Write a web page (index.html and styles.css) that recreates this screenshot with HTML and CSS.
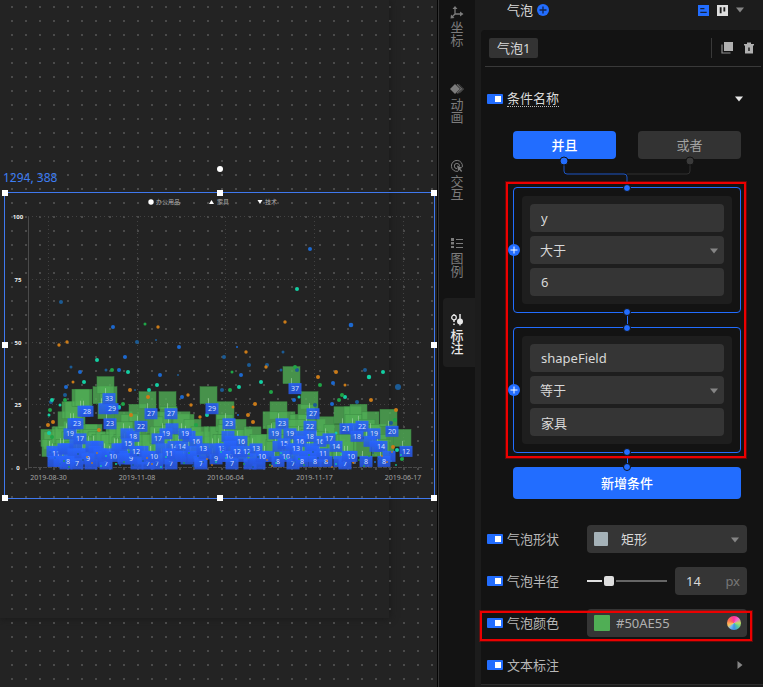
FILE: index.html
```html
<!DOCTYPE html>
<html lang="zh-CN">
<head>
<meta charset="utf-8">
<title>气泡图配置</title>
<link rel="stylesheet" href="styles.css">
</head>
<body>
<div class="app">
  <main class="stage">
    <div class="artboard"></div>
    <div class="rotate"></div>
    <div class="position">1294, 388</div>
    <div class="selection">
      <svg class="chart" id="chart" viewBox="4 192 430 306" role="img" aria-label="气泡图"></svg>
      <i class="handle nw"></i><i class="handle n"></i><i class="handle ne"></i>
      <i class="handle w"></i><i class="handle e"></i>
      <i class="handle sw"></i><i class="handle s"></i><i class="handle se"></i>
    </div>
  </main>

  <nav class="rail">
    <a class="rail-item" href="#axis">
      <svg viewBox="0 0 14 14"><path d="M5 3v6h7M5 9l-3 3" fill="none" stroke="currentColor" stroke-width="1.300"/><path d="M2.500 4L5 1l2.500 3zM10 6.500L13.500 9 10 11.500zM1 9.500L.5 13.500l4-.5z" fill="currentColor"/></svg>
      <span>坐标</span></a>
    <a class="rail-item" href="#animation">
      <svg viewBox="0 0 14 14"><path d="M9 2.500L13.500 7 9 11.500" fill="none" stroke="currentColor" stroke-dasharray="1 .6"/><path d="M7 2.500L11.500 7 7 11.500" fill="none" stroke="currentColor" stroke-width="1.500" stroke-dasharray="1 .4"/><path d="M5 2L10 7 5 12 0 7z" fill="currentColor"/></svg>
      <span>动画</span></a>
    <a class="rail-item" href="#interaction">
      <svg viewBox="0 0 14 14" fill="none" stroke="currentColor"><path d="M12.300 8A5.500 5.500 0 1 0 8 12.300M9.500 7A2.600 2.600 0 1 0 7 9.600"/><path d="M7 6.500l5.500 2.300-2.300 1 2 2.200-1 1-2-2.200-.9 1.700z" fill="currentColor" stroke="none"/></svg>
      <span>交互</span></a>
    <a class="rail-item" href="#legend">
      <svg viewBox="0 0 14 14" fill="currentColor"><path d="M1 2h3v3H1zM1 6h3v2.500H1zM1 10h3v2H1zM6 3h7v1H6zM6 7h7v1H6zM6 11h7v1H6z"/></svg>
      <span>图例</span></a>
    <a class="rail-item active" href="#marks">
      <svg viewBox="0 0 14 14"><path d="M4 7V9M4 10.500v1.500M10 1v6" stroke="currentColor" stroke-width="1.500"/><circle cx="4" cy="4.500" r="2.300" fill="none" stroke="currentColor" stroke-width="1.300"/><circle cx="10" cy="8.500" r="3" fill="currentColor"/><path d="M4 1v1.500M10 11v1.500" stroke="currentColor" stroke-width="1.300"/></svg>
      <span>标注</span></a>
  </nav>

  <aside class="panel">
    <header class="panel-head">
      <span>气泡</span>
      <button class="plus" aria-label="新增气泡"><svg viewBox="0 0 12 12"><path d="M6 2.500v7M2.500 6h7"/></svg></button>
      <span class="spacer"></span>
      <button class="view on" aria-label="列表视图"><svg viewBox="0 0 12 12"><path d="M0 0h12v12H0z" fill="#226dff"/><path d="M2.500 4h4.500M2.500 8h7" stroke="#14213c" stroke-width="1.500"/></svg></button>
      <button class="view" aria-label="看板视图"><svg viewBox="0 0 12 12"><path d="M0 0h12v12H0z" fill="#dedede"/><path d="M4 2.500v6.500M8 2.500v4.500" stroke="#1c1c1c" stroke-width="2"/></svg></button>
      <button class="caret" aria-label="更多"><svg viewBox="0 0 8 6"><path d="M0 0.500h8L4 5.500z"/></svg></button>
    </header>

    <section class="card">
      <div class="tabs">
        <button class="tab">气泡1</button>
        <span class="spacer"></span>
        <span class="divider"></span>
        <button class="tool" aria-label="复制"><svg viewBox="0 0 12 12"><path d="M3 0h9v9H3z" fill="#b0b0b0"/><path d="M1 2.500v8.500h8.500" fill="none" stroke="#8b8b8b" stroke-width="1.200"/></svg></button>
        <button class="tool" aria-label="删除"><svg viewBox="0 0 12 12" fill="#b0b0b0"><path d="M1 2h3V.5h4V2h3v1.500H1z"/><path fill-rule="evenodd" d="M2 3h8v8.500H2zM5.300 5.500v3.500h1.400V5.500z"/></svg></button>
      </div>

      <div class="row title-row">
        <input class="switch" type="checkbox" id="cond" checked>
        <label class="label strong" for="cond">条件名称</label>
        <span class="spacer"></span>
        <button class="caret light" aria-label="收起"><svg viewBox="0 0 8 6"><path d="M0 0.500h8L4 5.500z"/></svg></button>
      </div>

      <div class="conditions">
        <div class="logic">
          <button class="choice on">并且</button>
          <button class="choice">或者</button>
        </div>
        <svg class="branch" viewBox="0 0 228 28">
          <path d="M114 15h60q3 0 3-3V2" fill="none" stroke="#303030"/>
          <path d="M51 2v10q0 3 3 3h57q3 0 3 3v10" fill="none" stroke="#1c55c4"/>
          <circle cx="177" cy="2" r="4" fill="#3a3a3a" stroke="#131313"/>
          <circle cx="51" cy="2" r="4" fill="#226dff" stroke="#131313"/>
        </svg>
        <div class="group">
          <i class="node top"></i><i class="node bottom"></i>
          <button class="plus side" aria-label="新增"><svg viewBox="0 0 12 12"><path d="M6 2.500v7M2.500 6h7"/></svg></button>
          <div class="fields">
            <input class="field" type="text" value="y" aria-label="字段">
            <div class="pick"><select class="field" aria-label="比较"><option>大于</option></select><svg viewBox="0 0 8 6"><path d="M0 0.500h8L4 5.500z"/></svg></div>
            <input class="field" type="text" value="6" aria-label="数值">
          </div>
        </div>
        <div class="link"></div>
        <div class="group">
          <i class="node top"></i><i class="node bottom"></i>
          <button class="plus side" aria-label="新增"><svg viewBox="0 0 12 12"><path d="M6 2.500v7M2.500 6h7"/></svg></button>
          <div class="fields">
            <input class="field" type="text" value="shapeField" aria-label="字段">
            <div class="pick"><select class="field" aria-label="比较"><option>等于</option></select><svg viewBox="0 0 8 6"><path d="M0 0.500h8L4 5.500z"/></svg></div>
            <input class="field" type="text" value="家具" aria-label="数值">
          </div>
        </div>
        <div class="link"></div>
        <button class="add"><i class="node top"></i>新增条件</button>
        <div class="highlight around"></div>
      </div>

      <div class="settings">
        <div class="row">
          <input class="switch" type="checkbox" id="s1" checked>
          <label class="label" for="s1">气泡形状</label>
          <div class="control pick shape"><i class="swatch small"></i><select class="field" aria-label="形状"><option>矩形</option></select><svg viewBox="0 0 8 6"><path d="M0 0.500h8L4 5.500z"/></svg></div>
        </div>
        <div class="row">
          <input class="switch" type="checkbox" id="s2" checked>
          <label class="label" for="s2">气泡半径</label>
          <div class="control radius">
            <input class="slider" type="range" min="0" max="58" value="14" aria-label="半径">
            <div class="number"><input class="field" type="text" value="14" aria-label="半径数值"><span>px</span></div>
          </div>
        </div>
        <div class="row">
          <input class="switch" type="checkbox" id="s3" checked>
          <label class="label" for="s3">气泡颜色</label>
          <div class="control color"><i class="swatch green"></i><input class="field" type="text" value="#50AE55" aria-label="颜色"><i class="wheel"></i></div>
          <div class="highlight whole"></div>
        </div>
        <div class="row fold-row">
          <input class="switch" type="checkbox" id="s4" checked>
          <label class="label" for="s4">文本标注</label>
          <span class="spacer"></span>
          <button class="caret closed" aria-label="展开"><svg viewBox="0 0 6 8"><path d="M0.500 0v8L5.500 4z"/></svg></button>
        </div>
      </div>
    </section>
  </aside>
</div>
<script src="chart.js"></script>
</body>
</html>
```
FILE: styles.css
```css
* { box-sizing: border-box; }

body {
  margin: 0;
  background: #131313;
  color: #d8d8d8;
  font: 13px/20px "Noto Sans", "Noto Sans CJK SC", sans-serif;
}

button, input, select { font: inherit; color: inherit; margin: 0; }
button { border: 0; padding: 0; background: none; }
svg { display: block; }

.app { display: flex; min-height: 100vh; overflow: hidden; }

/* Design canvas */
.stage {
  flex: 1;
  position: relative;
  overflow: hidden;
  background: #232323;
  border-right: 1px solid #050505;
}
.stage::after {
  content: "";
  position: absolute;
  inset: 0;
  background: conic-gradient(from 270deg at 2px 2px, #4a4a4a 25%, transparent 0) 11px 6px / 14px 14px;
  pointer-events: none;
}
.artboard {
  position: absolute;
  left: 0;
  top: 0;
  width: 389px;
  height: 618px;
  background: #232323;
  box-shadow: 0 0 8px #171717;
}
.rotate {
  position: absolute;
  left: 217px;
  top: 166px;
  width: 6px;
  height: 6px;
  border-radius: 50%;
  background: #fff;
  z-index: 2;
}
.position { position: absolute; left: 3px; top: 168px; font-size: 12px; color: #3e7ef2; z-index: 1; }
.selection {
  position: absolute;
  left: 4px;
  top: 192px;
  width: 431px;
  height: 307px;
  border: 1px solid #3f78ee;
  z-index: 1;
}
.chart { width: 430px; height: 306px; margin: -1px; }
.handle { position: absolute; width: 6px; height: 6px; background: #fff; }
.nw, .w, .sw { left: -3px; }
.n, .s { left: 212px; }
.ne, .e, .se { right: -3px; }
.nw, .n, .ne { top: -3px; }
.w, .e { top: 149px; }
.sw, .s, .se { bottom: -3px; }
.chart text { font-family: "Noto Sans", "Noto Sans CJK SC", sans-serif; }
.grid { stroke: #424242; stroke-dasharray: 1 3; }
.axis { stroke: #4a4a4a; }
.tick { font-size: 6px; font-weight: 700; fill: #f0f0f0; text-anchor: middle; }
.date { font-size: 7px; fill: #a4a4a4; text-anchor: middle; }
.legend { font-size: 6px; fill: #b5b5b5; }
.mark { font-size: 7px; fill: #d5e0ff; text-anchor: middle; }

/* Section rail */
.rail {
  width: 37px;
  border-left: 1px solid #343434;
  background: #131313;
  display: flex;
  flex-direction: column;
  gap: 8px;
  padding-left: 4px;
  margin-top: -10px;
}
.rail-item {
  height: 69px;
  padding-top: 15px;
  padding-right: 4px;
  border-radius: 4px 0 0 4px;
  color: #7c7c7c;
  text-decoration: none;
  display: flex;
  flex-direction: column;
  align-items: center;
  gap: 2px;
}
.rail-item svg { width: 14px; height: 14px; }
.rail-item span { width: 13px; line-height: 13px; }
.rail-item.active { background: #1e1e1e; color: #e8e8e8; font-weight: 500; }

/* Settings panel */
.panel { width: 288px; background: #1c1c1c; padding-left: 6px; }
.panel-head {
  height: 30px;
  padding: 0 19px 10px 26px;
  display: flex;
  align-items: center;
}
.spacer { flex: 1; }
.plus {
  width: 12px;
  height: 12px;
  border-radius: 50%;
  background: #226dff;
}
.plus svg { stroke: #fff; fill: none; }
.panel-head .plus { margin-left: 4px; }
.panel-head .plus svg { stroke: #10244f; stroke-width: 1.3; }
.view { width: 11px; height: 11px; margin-right: 8px; }
.caret { width: 8px; }
.caret svg, .pick svg { fill: #858585; width: 8px; height: 6px; }
.caret.light svg { fill: #e8e8e8; }
.caret.closed { width: 6px; }
.caret.closed svg { width: 6px; height: 8px; }

.card {
  min-height: 655px;
  background: #131313;
  border-radius: 4px 0 0 0;
  border-bottom: 1px solid #2c2c2c;
}
.tabs {
  margin: 0 2px 0 4px;
  padding: 8px 4px;
  border-bottom: 1px solid #393939;
  display: flex;
  align-items: center;
}
.tab { height: 20px; padding: 0 8px; border-radius: 2px; background: #333; }
.divider { width: 1px; height: 20px; background: #393939; margin-right: 9px; }
.tool { width: 12px; height: 12px; margin-right: 10px; }
.tool:last-child { margin-right: 2px; }

.row {
  position: relative;
  min-height: 28px;
  padding: 0 16px 0 6px;
  display: flex;
  align-items: center;
}
.title-row { margin: 18px 0; padding-right: 20px; }
.fold-row { padding-right: 20px; }
.switch {
  appearance: none;
  width: 16px;
  height: 10px;
  margin-right: 4px;
  border-radius: 1px;
  background: linear-gradient(#fff 0 0) 8px 2px / 6px 6px no-repeat #226dff;
}
.label { color: #b8b8b8; }
.label.strong { color: #dadada; line-height: 15px; border-bottom: 1px dotted #bbb; }

.conditions { position: relative; margin: 0 22px 0 32px; }
.logic { display: flex; gap: 22px; }
.choice {
  flex: 1;
  height: 28px;
  border-radius: 4px;
  background: #333;
  color: #a2a2a2;
}
.choice.on { background: #226dff; color: #fff; font-weight: 500; }
.branch { width: 100%; height: 28px; overflow: visible; }
.group {
  position: relative;
  padding: 8px;
  border: 1px solid #226dff;
  border-radius: 4px;
}
.fields {
  padding: 8px;
  border-radius: 4px;
  background: #1e1e1e;
  display: grid;
  gap: 4px;
}
.field {
  width: 100%;
  height: 28px;
  padding: 0 11px;
  border: 0;
  border-radius: 4px;
  background: #353535;
  appearance: none;
}
select.field { padding: 0 10px; }
.pick { position: relative; }
.pick svg { position: absolute; right: 6px; top: 12px; }
.shape svg { right: 8px; }
.side { position: absolute; left: -6px; top: 56px; z-index: 1; }
.node {
  position: absolute;
  left: 50%;
  width: 8px;
  height: 8px;
  margin-left: -4px;
  border: 1px solid #131313;
  border-radius: 50%;
  background: #226dff;
  z-index: 1;
}
.node.top { top: -4px; }
.node.bottom { bottom: -4px; }
.link { width: 1px; height: 14px; margin: 0 auto; background: #226dff; }
.add {
  position: relative;
  display: block;
  width: 100%;
  height: 32px;
  border-radius: 4px;
  background: #226dff;
  color: #fff;
  font-weight: 500;
}
.highlight {
  position: absolute;
  border: 2px solid #ec0000;
  outline: 1px solid rgb(200 0 0 / 40%);
  pointer-events: none;
  z-index: 2;
}
.around { left: -7px; right: -5px; top: 51px; bottom: 41px; }
.whole { left: -1px; right: 11px; top: 2px; bottom: -4px; }

.settings { margin-top: 26px; display: grid; gap: 14px; }
.control { width: 160px; margin-left: auto; }
.swatch { position: absolute; width: 16px; height: 16px; left: 7px; top: 6px; border-radius: 1px; }
.swatch.small { width: 14px; height: 14px; top: 7px; background: #a5b2b8; }
.swatch.green { background: #50ae55; }
.shape select.field { padding-left: 34px; }
.radius { display: flex; gap: 8px; align-items: center; }
.slider {
  appearance: none;
  flex: 1;
  min-width: 0;
  height: 12px;
  background: linear-gradient(90deg, #e0e0e0 18px, #666 0) center / 100% 2px no-repeat;
}
.slider::-webkit-slider-thumb {
  appearance: none;
  width: 10px;
  height: 10px;
  border-radius: 2px;
  background: #dedede;
  box-shadow: 0 0 0 2px #131313;
}
.number { position: relative; width: 72px; }
.number span { position: absolute; right: 7px; top: 4px; color: #777; }
.color { position: relative; }
.color .field { padding-left: 29px; color: #b0b0b0; }
.wheel {
  position: absolute;
  right: 6px;
  top: 7px;
  width: 14px;
  height: 14px;
  border-radius: 50%;
  background: conic-gradient(#ff2fa0, #f06ad0, #b8e060 90deg, #55c8a0, #3f8fe8 180deg, #6fb8f0, #ffc45a 250deg, #ff6a50 300deg, #ff2fa0);
}
```
FILE: chart.js
```js
// Each entry is [label x, value]; the square is centred a little left of its label.
const marks = [
  [53,12],[56,11],[54,8],[60,8],[66,7],[70,9],[64,13],[67,13],[76,15],[70,19],[80,17],[74,23],[77,23],[84,28],[87,28],
  [74,11],[80,11],[86,11],[92,14],[97,14],[95,12],[68,8],[77,7],[91,7],[103,8],[106,7],[100,11],[88,9],[104,10],[108,11],
  [105,29],[112,29],[109,33],[110,23],[118,13],[113,10],[121,13],[126,10],[124,9],[127,19],[133,18],[128,15],[141,22],
  [142,12],[142,9],[137,7],[131,9],[136,12],[148,7],[157,7],[148,10],[154,10],[151,27],[171,27],[172,21],[166,19],[158,17],
  [162,13],[174,14],[182,14],[165,9],[187,9],[171,7],[180,10],[176,10],[169,11],[189,18],[185,19],[196,16],[192,12],[194,10],
  [200,8],[201,7],[205,11],[203,13],[212,29],[216,9],[216,13],[222,13],[229,23],[228,18],[231,16],[241,16],[230,14],
  [225,10],[229,10],[241,10],[237,12],[247,12],[256,13],[232,7],[250,7],[259,7],[256,9],[268,10],[262,10],[278,8],
  [282,23],[275,19],[290,19],[279,14],[284,15],[292,13],[286,10],[293,7],[295,37],[313,27],[310,22],[302,18],[310,18],
  [300,16],[320,16],[329,17],[296,13],[311,13],[313,12],[336,14],[299,10],[306,10],[318,10],[302,8],[315,8],[326,8],
  [323,11],[340,8],[345,7],[348,10],[351,10],[346,21],[356,21],[362,22],[357,18],[374,19],[370,16],[376,14],[381,14],
  [389,10],[366,8],[384,8],[392,20],[406,12]
];

// Scatter points as [x, y, radius], grouped by colour.
const points = {
  "#1c68cf": [[113,327,2],[310,249,2],[351,325,2.300],[119,370,2],[80,372,2],[66,387,2],[125,357,2],[160,375,2],[179,347,2],
    [241,375,2],[237,347,1],[333,383,2],[182,397,2],[294,400,2],[332,404,2],[238,415,1],[119,408,2],[293,460,1],[375,462,1]],
  "#1c5b94": [[61,302,2],[137,342,2],[156,340,1],[71,367,1.500],[65,395,2],[106,370,1.500],[224,357,2],[249,365,2],[267,365,2],
    [283,352,1.500],[281,370,1.500],[365,370,2],[398,387,3],[222,390,2],[135,390,1],[178,375,1],[51,402,2],[297,370,2],[357,402,2],[315,405,2],[391,423,2]],
  "#13cfa3": [[297,289,2],[97,360,2],[128,372,2],[84,382,2],[157,385,2],[239,387,2],[261,382,2],[52,400,2],[60,405,1.500],[49,415,1.500],
    [369,377,2.200],[383,372,2],[345,397,2],[299,397,1.500],[119,407,2],[149,390,2],[207,415,2],[49,433,2],[336,433,1.500],[397,450,2],[116,464,1],[391,461,1]],
  "#20a447": [[145,324,1.500],[112,370,2],[50,410,2],[123,404,2],[232,372,1.500],[230,390,2],[271,392,2],[295,367,2],[320,385,2],
    [342,395,2],[339,400,2],[395,420,2],[52,437,2],[65,400,2],[280,424,2],[196,425,2],[402,459,2],[270,465,1]],
  "#cb7b18": [[158,327,1.700],[285,322,1.700],[59,345,1.700],[67,342,1.700],[130,390,2],[73,382,1.500],[188,395,1.700],[191,405,1.700],[200,417,1.700],
    [246,352,1.700],[266,367,1.700],[255,404,2],[248,415,2],[253,422,2],[318,377,2],[336,372,2],[345,385,1.500],[371,400,2],[396,410,2],
    [53,422,2],[48,425,2],[148,397,2],[99,430,2],[131,415,2],[354,462,2],[368,466,1],[393,447,2],[233,407,1.500]]
};

const yOf = v => 468 - v * 2.51;
const out = [];

out.push(`<defs><linearGradient id="tag" x1="0" y1="0" x2="0" y2="1">
  <stop offset="0" stop-color="#2865ff"/><stop offset="1" stop-color="#2756e0"/></linearGradient></defs>`);

[100, 75, 50, 25, 0].forEach(v => {
  const y = Math.round(yOf(v)) - 0.5;
  if (v) out.push(`<path class="grid" d="M28 ${y}H423"/>`);
  out.push(`<text class="tick" x="18" y="${y + 2.5}">${v}</text>`);
});
[["2019-08-30", 48.5], ["2019-11-08", 137], ["2016-06-04", 225.5], ["2019-11-17", 314.5], ["2019-06-17", 403]].forEach(([t, x]) => {
  out.push(`<path class="grid" d="M${Math.floor(x) + 0.5} 217V468"/><text class="date" x="${x}" y="480">${t}</text>`);
});
out.push('<path class="axis" d="M28.5 217V468.500"/><path class="axis" stroke-dasharray="4 1" d="M28 467.500H423"/>');

out.push('<circle cx="151" cy="202" r="2.700" fill="#fff"/><text class="legend" x="156" y="204">办公用品</text>');
out.push('<path d="M209 204l2.500-4 2.500 4z" fill="#fff"/><text class="legend" x="217" y="204">家具</text>');
out.push('<path d="M257.500 200h5l-2.500 4z" fill="#fff"/><text class="legend" x="265" y="204">技术</text>');

marks.forEach(([x, v]) => {
  out.push(`<rect x="${x - 12}" y="${yOf(v) - 8.5}" width="17" height="17" fill="#50ae55" fill-opacity=".8" stroke="#3b8a43" stroke-width=".5"/>`);
});
marks.forEach(([x, v]) => {
  out.push(`<path d="M${x - 3.5} ${yOf(v) + 3}v6" stroke="#a8d8aa" stroke-width=".6"/>`);
});
Object.entries(points).forEach(([fill, list]) => {
  list.forEach(([x, y, r]) => out.push(`<circle cx="${x}" cy="${y}" r="${r}" fill="${fill}"/>`));
});
// A tag that lies under a later one keeps its box and drops its number.
marks.forEach(([x, v], i) => {
  const y = yOf(v) + 13.5;
  const covered = marks.slice(i + 1).some(([x2, v2]) => Math.abs(x2 - x) < 8 && Math.abs(v2 - v) * 2.51 < 7);
  out.push(`<rect x="${x - 6.5}" y="${y - 5.5}" width="13" height="11" fill="url(#tag)" fill-opacity=".88"/>`);
  if (!covered) out.push(`<text class="mark" x="${x}" y="${y + 2.5}">${v}</text>`);
});
// Small points crowded along the baseline.
const colors = Object.keys(points);
for (let i = 0; i < 70; i++) {
  const x = 50 + (i * 83) % 355;
  const y = 452 + (i * 29) % 16;
  out.push(`<circle cx="${x}" cy="${y}" r="1" fill="${colors[i % 5]}" fill-opacity=".8"/>`);
}

document.getElementById("chart").innerHTML = out.join("");
```
